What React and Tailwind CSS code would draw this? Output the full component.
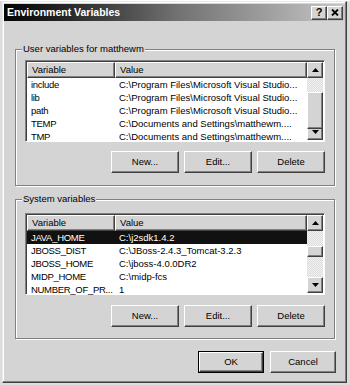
import { useState } from "react";

const userVars = [
  ["include", "C:\\Program Files\\Microsoft Visual Studio..."],
  ["lib", "C:\\Program Files\\Microsoft Visual Studio..."],
  ["path", "C:\\Program Files\\Microsoft Visual Studio..."],
  ["TEMP", "C:\\Documents and Settings\\matthewm...."],
  ["TMP", "C:\\Documents and Settings\\matthewm...."],
];

const systemVars = [
  ["JAVA_HOME", "C:\\j2sdk1.4.2"],
  ["JBOSS_DIST", "C:\\JBoss-2.4.3_Tomcat-3.2.3"],
  ["JBOSS_HOME", "C:\\jboss-4.0.0DR2"],
  ["MIDP_HOME", "C:\\midp-fcs"],
  ["NUMBER_OF_PR...", "1"],
];

const raised =
  "bg-[#d4d4d4] border border-t-white border-l-white border-r-[#404040] border-b-[#404040] shadow-[inset_-1px_-1px_0_#808080]";

function Arrow({ down }) {
  return (
    <svg width="7" height="4" viewBox="0 0 7 4">
      <path d={down ? "M0 0h7L3.5 4z" : "M0 4h7L3.5 0z"} fill="#000" />
    </svg>
  );
}

function ScrollBar({ thumbTop, thumbHeight }) {
  return (
    <div className="w-[16px] flex flex-col">
      <div className={`${raised} h-[16px] flex items-center justify-center`}>
        <Arrow />
      </div>
      <div className="flex-1 relative bg-[image:repeating-conic-gradient(#f2f2f2_0_25%,#dcdcdc_0_50%)] bg-[length:2px_2px]">
        <div
          className={`${raised} absolute left-0 right-0`}
          style={{ top: thumbTop, height: thumbHeight }}
        />
      </div>
      <div className={`${raised} h-[16px] flex items-center justify-center`}>
        <Arrow down />
      </div>
    </div>
  );
}

function VarList({ rows, selected, thumbTop, thumbHeight }) {
  return (
    <div className="w-[300px] h-[82px] flex border border-t-[#808080] border-l-[#808080] border-r-white border-b-white shadow-[inset_1px_1px_0_#404040] p-[1px] bg-white">
      <div className="flex-1 flex flex-col">
        <div className="flex h-[16px]">
          <div className={`${raised} w-[88px] pl-[4px] leading-[14px]`}>Variable</div>
          <div className={`${raised} flex-1 pl-[4px] leading-[14px]`}>Value</div>
        </div>
        {rows.map(([name, value], i) => (
          <div
            key={name}
            className={`flex h-[13px] leading-[13px] ${i === selected ? "bg-[#111] text-white" : ""}`}
          >
            <div className="w-[88px] pl-[4px] whitespace-nowrap tracking-[-0.3px]">{name}</div>
            <div className="flex-1 pl-[4px] whitespace-nowrap overflow-hidden">{value}</div>
          </div>
        ))}
      </div>
      <ScrollBar thumbTop={thumbTop} thumbHeight={thumbHeight} />
    </div>
  );
}

function Button({ children, isDefault, w = "w-[68px]" }) {
  return (
    <button className={`${w} h-[22px] ${isDefault ? "border border-black p-0" : ""} flex`}>
      <span className={`${raised} flex-1 flex items-center justify-center`}>{children}</span>
    </button>
  );
}

function GroupBox({ label, children, className }) {
  return (
    <div
      className={`relative w-[320px] ml-[11px] border border-[#808080] shadow-[inset_1px_1px_0_white,1px_1px_0_white] ${className}`}
    >
      <span className="absolute left-[6px] -top-[8px] px-[1px] bg-[#d4d4d4] leading-[14px]">
        {label}
      </span>
      {children}
    </div>
  );
}

export default function App() {
  const [sel] = useState(0);
  return (
    <div className="w-[350px] h-[385px] bg-[#dcdcdc] font-['Liberation_Sans',Arial,sans-serif] text-[9.5px] text-black">
      <div className="ml-[2px] mt-[1px] w-[345px] h-[382px] bg-[#d4d4d4] border border-t-[#e8e8e8] border-l-[#e8e8e8] border-r-[#404040] border-b-[#404040] shadow-[inset_-1px_-1px_0_#808080,inset_1px_1px_0_white] px-[1px] pt-[2px] flex flex-col">
        <div className="h-[17px] flex items-center bg-linear-to-r from-[#050505] via-[#707070] to-[#c8c8c8] pl-[3px] pr-[2px]">
          <span className="flex-1 text-white font-bold text-[10.5px] leading-none">
            Environment Variables
          </span>
          <div className={`${raised} w-[16px] h-[14px] flex items-center justify-center text-[11px] font-bold leading-none`}>
            ?
          </div>
          <div className={`${raised} w-[16px] h-[14px] flex items-center justify-center`}>
            <svg width="8" height="7" viewBox="0 0 8 7">
              <path d="M1 0.5L7 6.5M7 0.5L1 6.5" stroke="#000" strokeWidth="1.8" />
            </svg>
          </div>
        </div>

        <GroupBox label="User variables for matthewm" className="mt-[28px] pt-[10px] pb-[12px]">
          <div className="pl-[9px]">
            <VarList rows={userVars} selected={-1} thumbTop={14} thumbHeight={37} />
          </div>
          <div className="flex justify-end gap-[5px] pr-[9px] mt-[9px]">
            <Button>New...</Button>
            <Button>Edit...</Button>
            <Button>Delete</Button>
          </div>
        </GroupBox>

        <GroupBox label="System variables" className="mt-[13px] pt-[13px] pb-[11px]">
          <div className="pl-[9px]">
            <VarList rows={systemVars} selected={sel} thumbTop={15} thumbHeight={11} />
          </div>
          <div className="flex justify-end gap-[5px] pr-[9px] mt-[10px]">
            <Button>New...</Button>
            <Button>Edit...</Button>
            <Button>Delete</Button>
          </div>
        </GroupBox>

        <div className="flex justify-end gap-[6px] mt-[12px] pr-[9px]">
          <Button isDefault w="w-[66px]">OK</Button>
          <Button w="w-[66px]">Cancel</Button>
        </div>
      </div>
    </div>
  );
}
